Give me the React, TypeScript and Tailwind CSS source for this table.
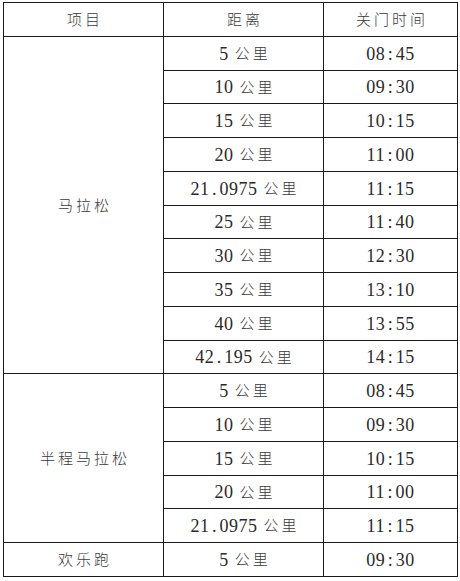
const marathon: [string, string][] = [
  ['5', '08:45'],
  ['10', '09:30'],
  ['15', '10:15'],
  ['20', '11:00'],
  ['21.0975', '11:15'],
  ['25', '11:40'],
  ['30', '12:30'],
  ['35', '13:10'],
  ['40', '13:55'],
  ['42.195', '14:15'],
];

const halfMarathon: [string, string][] = [
  ['5', '08:45'],
  ['10', '09:30'],
  ['15', '10:15'],
  ['20', '11:00'],
  ['21.0975', '11:15'],
];

const funRun: [string, string][] = [['5', '09:30']];

const sections = [
  { name: '马拉松', span: 'row-span-10', rows: marathon },
  { name: '半程马拉松', span: 'row-span-5', rows: halfMarathon },
  { name: '欢乐跑', span: 'row-span-1', rows: funRun },
];

const cell =
  'flex items-center justify-center border-r border-b border-[#1a1a1a]';

// SimSun-style numbers: punctuation sits in a full half-width cell
const Num = ({ value }: { value: string }) => (
  <span className="font-['Liberation_Serif',serif] text-[18px] tracking-[0.5px] translate-y-[1px]">
    {value.split(/([.:])/).map((part, i) =>
      part === '.' || part === ':' ? (
        <span key={i} className="mx-[2.5px]">
          {part}
        </span>
      ) : (
        <span key={i}>{part}</span>
      )
    )}
  </span>
);

const Han = ({ children }: { children: string }) => (
  <span className="font-['Noto_Sans_CJK_SC',sans-serif] text-[15px] tracking-[3px] font-light mr-[-3px] text-[#3a3a3a]">
    {children}
  </span>
);

export default function App() {
  return (
    <div className="w-[460px] h-[581px] bg-white text-[#2a2a2a] pt-[2px] pl-[3px]">
      <div className="grid w-[455px] grid-cols-[160px_160px_134px] grid-rows-[repeat(17,33.76px)] border-t border-l border-[#1a1a1a]">
        {/* header */}
        <div className={cell}>
          <Han>项目</Han>
        </div>
        <div className={cell}>
          <Han>距离</Han>
        </div>
        <div className={cell}>
          <Han>关门时间</Han>
        </div>

        {sections.map(section => (
          <div key={section.name} className="contents">
            <div className={`${cell} col-start-1 ${section.span}`}>
              <Han>{section.name}</Han>
            </div>
            {section.rows.map(([dist, time]) => (
              <div key={section.name + dist} className="contents">
                <div className={`${cell} col-start-2`}>
                  <Num value={dist} />
                  <span className="w-[6px]" />
                  <Han>公里</Han>
                </div>
                <div className={`${cell} col-start-3`}>
                  <Num value={time} />
                </div>
              </div>
            ))}
          </div>
        ))}
      </div>
    </div>
  );
}
